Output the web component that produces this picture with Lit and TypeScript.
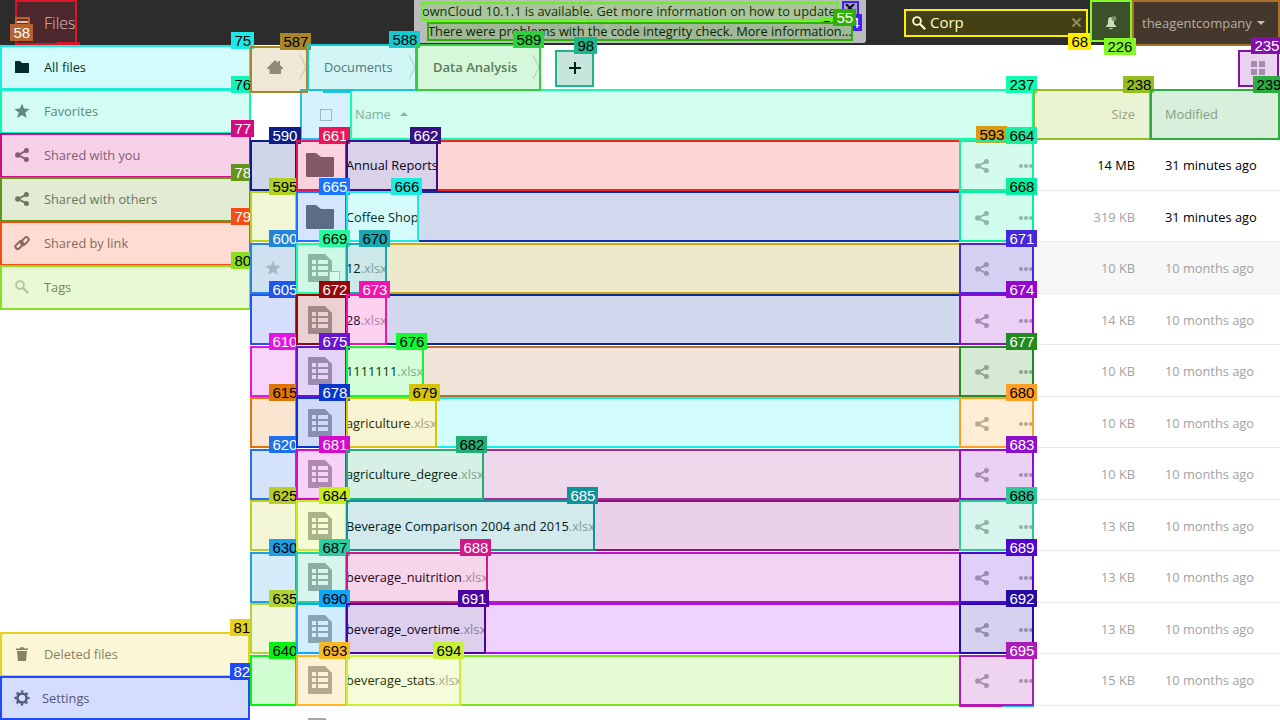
import { LitElement, html, css, svg, nothing } from "lit";
import { customElement } from "lit/decorators.js";
import { styleMap } from "lit/directives/style-map.js";

type Mark = { x: number; y: number; w: number; h: number; c: string; n?: string; lx?: number; ly?: number; lw?: number; lh?: number; shift?: number; dark?: boolean };

const sharePath = svg`<path d="M3 7 L11.3 2.6 M3 7 L11.3 11.4" stroke="currentColor" stroke-width="1.8" fill="none"/><circle cx="2.8" cy="7" r="2.7"/><circle cx="11.4" cy="2.6" r="2.5"/><circle cx="11.4" cy="11.4" r="2.5"/>`;

const ICONS: Record<string, unknown> = {
  folder: svg`<path d="M0 1.5Q0 1 .6 1H5l2 2h6.4q.6 0 .6.6V12.400q0 .6-.6.6H.6q-.6 0-.6-.6z"/>`,
  star: svg`<path d="M7 -.5l2 5.100 5.500.4-4.200 3.500 1.400 5.400L7 11l-4.700 2.900 1.400-5.400L-.5 5l5.500-.4z"/>`,
  share: sharePath,
  link: svg`<g fill="none" stroke="currentColor" stroke-width="2" transform="rotate(-45 7 7)"><rect x="-.9" y="4.300" width="9" height="4.600" rx="2.300"/><rect x="5.900" y="5.300" width="9" height="4.600" rx="2.300"/></g>`,
  search: svg`<circle cx="5" cy="5" r="3.900" fill="none" stroke="currentColor" stroke-width="1.900"/><path d="M7.800 7.800L13.200 13.200" stroke="currentColor" stroke-width="2.300"/>`,
  trash: svg`<path d="M1 1.400h3.800L5.300.3h3.400l.5 1.100H13v1.700H1zM2 4h10l-1 10H3z"/>`,
  gear: svg`<g fill="none" stroke="currentColor"><circle cx="7" cy="7" r="4.600" stroke-width="2.500"/><circle cx="7" cy="7" r="6.600" stroke-width="1.900" stroke-dasharray="2.400 2.784" stroke-dashoffset="1.200"/></g>`,
};

const NAV = [
  ["folder", "All files", "active"],
  ["star", "Favorites", ""],
  ["share", "Shared with you", ""],
  ["share", "Shared with others", ""],
  ["link", "Shared by link", ""],
  ["search", "Tags", "faint"],
];

const FILES = [
  { name: "Annual Reports", ext: "", size: "14 MB", date: "31 minutes ago", end: 438, c: ["#0a2088", "#ec1458", "#3a0e88", "#f52222", "#1cecA0"], n: [590, 661, 662, 664], d: "wwwb" },
  { name: "Coffee Shop", ext: "", size: "319 KB", date: "31 minutes ago", end: 419, c: ["#b2d222", "#1a74ff", "#1ceade", "#0e2ea4", "#06eea0"], n: [595, 665, 666, 668], d: "bwbb" },
  { name: "12", ext: ".xlsx", size: "10 KB", date: "10 months ago", end: 387, c: ["#2484d8", "#22fc9c", "#18a8b0", "#ccaa14", "#4628dc"], n: [600, 669, 670, 671], d: "wbbw" },
  { name: "28", ext: ".xlsx", size: "14 KB", date: "10 months ago", end: 387, c: ["#2056ee", "#960808", "#f212b0", "#0a2898", "#9406d0"], n: [605, 672, 673, 674], d: "wwww" },
  { name: "1111111", ext: ".xlsx", size: "10 KB", date: "10 months ago", end: 424, c: ["#e614e6", "#6816d6", "#10f830", "#b87230", "#228a1e"], n: [610, 675, 676, 677], d: "wwbw" },
  { name: "agriculture", ext: ".xlsx", size: "10 KB", date: "10 months ago", end: 437, c: ["#de7606", "#0636d2", "#d6c408", "#12eeee", "#ff9e22"], n: [615, 678, 679, 680], d: "bwbb" },
  { name: "agriculture_degree", ext: ".xlsx", size: "10 KB", date: "10 months ago", end: 484, c: ["#2070ec", "#d60ace", "#24ae76", "#9c3292", "#8e0ecc"], n: [620, 681, 682, 683], d: "wwbw" },
  { name: "Beverage Comparison 2004 and 2015", ext: ".xlsx", size: "13 KB", date: "10 months ago", end: 595, c: ["#bacc26", "#c6ee1c", "#10929a", "#940c84", "#28c898"], n: [625, 684, 685, 686], d: "bbwb" },
  { name: "beverage_nuitrition", ext: ".xlsx", size: "13 KB", date: "10 months ago", end: 488, c: ["#1e9ee8", "#26cea0", "#d01888", "#b41cc0", "#5404d2"], n: [630, 687, 688, 689], d: "bbww" },
  { name: "beverage_overtime", ext: ".xlsx", size: "13 KB", date: "10 months ago", end: 486, c: ["#b0d432", "#0ea6f6", "#4c04a0", "#a80ef8", "#240ca4"], n: [635, 690, 691, 692], d: "bbww" },
  { name: "beverage_stats", ext: ".xlsx", size: "15 KB", date: "10 months ago", end: 461, c: ["#08f210", "#fcb824", "#c8f034", "#7ae61c", "#ac1cb8"], n: [640, 693, 694, 695], d: "bbbw" },
];

const ROW_TOPS = [140, 191, 243, 294, 346, 397, 449, 500, 552, 603, 655];

// A frame whose tag sits on its upper right corner, or its lower one when the frame touches the top edge.
const mark = (x: number, y: number, r: number, b: number, c: string, n = "", ink = "w", extra: Partial<Mark> = {}): Mark => {
  const lw = n.length === 3 ? 31 : 23;
  return { x, y, w: r - x, h: b - y, c, n, dark: ink === "b", lx: r + 3 - lw, ly: y - 13, lw, ...extra };
};

const MARKS: Mark[] = [
  mark(421, 2, 839, 21, "#66f222", "53", "b", { ly: 17, lh: 5 }),
  mark(842, 1, 859, 18, "#4420f0", "54", "w", { ly: 14, lx: 853, lw: 9, shift: -13 }),
  mark(427, 22, 853, 41, "#2eb006", "55"),
  mark(15, 0, 77, 45, "#dc1428"),
  mark(15, 17, 30, 28, "#b86430", "58", "w", { ly: 24 }),
  mark(904, 9, 1088, 37, "#ffee00", "68", "b", { ly: 33 }),
  mark(0, 45, 251, 90, "#1ceae8", "75", "b"),
  mark(0, 89, 251, 134, "#14f4b8", "76", "b", { lw: 19 }),
  mark(0, 133, 251, 178, "#d40c84", "77"),
  mark(0, 177, 251, 222, "#64941a", "78", "w", { lw: 19 }),
  mark(0, 221, 251, 266, "#f44c14", "79", "w", { lw: 19 }),
  mark(0, 265, 251, 310, "#8ae020", "80", "b", { lw: 19 }),
  mark(0, 632, 250, 677, "#e8d020", "81", "b", { lx: 230, lw: 20 }),
  mark(0, 676, 250, 720, "#2048fc", "82", "w", { lx: 230, lw: 20 }),
  mark(555, 50, 594, 87, "#1cb48a", "98", "b"),
  mark(1132, 0, 1280, 46, "#a87028"),
  mark(1090, 0, 1132, 42, "#84f828", "226", "b", { ly: 38, lx: 1104, lw: 32 }),
  mark(1238, 50, 1279, 87, "#8410ac", "235"),
  mark(300, 89, 352, 140, "#28b8fc"),
  mark(350, 89, 1034, 140, "#12fcb0", "237", "b"),
  mark(1033, 89, 1151, 140, "#94be20", "238", "b"),
  mark(1150, 89, 1280, 140, "#2cac40", "239", "b", { lx: 1253 }),
  mark(250, 46, 308, 93, "#a88628", "587", "b"),
  mark(307, 44, 417, 91, "#12cad0", "588", "b"),
  mark(416, 44, 541, 91, "#2cd23c", "589", "b"),
  ...FILES.map((f, i) => mark(250, ROW_TOPS[i], 297, ROW_TOPS[i] + 51, f.c[0], String(f.n[0]), f.d[0], { lx: 269, lw: i ? 28 : 32 })),
  { x: 0, y: 0, w: 0, h: 0, c: "#da9c16", n: "593", lx: 976, ly: 126, lw: 31, dark: true },
  ...FILES.flatMap((f, i) => {
    const t = ROW_TOPS[i], b = t + 51;
    return [
      mark(f.end - 2, t, 961, b, f.c[3]),
      mark(296, t, 348, b, f.c[1], String(f.n[1]), f.d[1], { w: 51, lx: 319 }),
      mark(346, t, f.end, b, f.c[2], String(f.n[2]), f.d[2]),
      mark(959, t, 1034, b, f.c[4], String(f.n[3]), f.d[3]),
    ];
  }),
];

@customElement("app-icon")
class AppIcon extends LitElement {
  static properties = { name: {} };
  declare name: string;
  static styles = css`
    :host { display: inline-flex; width: 14px; height: 14px; flex: none; }
    svg { width: 100%; height: 100%; overflow: visible; fill: currentColor; }
  `;
  render() {
    return html`<svg viewBox="0 0 14 14">${ICONS[this.name]}</svg>`;
  }
}

@customElement("app-root")
class AppRoot extends LitElement {
  static styles = css`
    :host { display: block; position: relative; width: 1280px; height: 720px; overflow: hidden; background: #fff; font: 12.8px/20px "Open Sans", sans-serif; color: #000; }
    * { box-sizing: border-box; }
    .header { height: 45px; background: #2c2c2c; display: flex; align-items: center; color: #bbb; }
    .menu { width: 29px; padding-left: 17px; display: grid; gap: 2px; margin-bottom: 2px; }
    .menu i { height: 2px; width: 11px; background: #fff; }
    .title { margin-left: 15px; font-size: 16px; font-weight: 300; color: #dcdcdc; flex: 1; }
    .search { width: 180px; height: 26px; background: #171717; display: flex; align-items: center; padding: 0 5px 0 6px; color: #fff; font-size: 15px; margin-right: 3px; }
    .search span { margin-left: 4px; flex: 1; padding-bottom: 2px; }
    .search svg { width: 9px; height: 9px; }
    .bell { width: 43px; display: flex; justify-content: center; }
    .user { width: 148px; padding: 1px 0 0 10px; display: flex; align-items: center; gap: 5px; white-space: nowrap; font-size: 13px; }
    .caret { border: 4px solid transparent; border-top-color: #ccc; border-bottom: 0; }
    .note { position: absolute; left: 414px; top: 0; width: 452px; height: 43px; background: #bbb; border-radius: 0 0 3px 3px; white-space: nowrap; color: #000; padding-top: 1px; overflow: hidden; }
    .note p { margin: 0; position: relative; }
    .note .first { padding-left: 8px; width: 425px; overflow: hidden; }
    .note .second { padding-left: 14px; }
    .note .close { position: absolute; left: 431px; top: 4px; }
    .ghost { position: absolute; left: 155px; top: 3px; opacity: .13; }
    .ghost text { font: 300 18px "Open Sans", sans-serif; }
    .body { display: flex; height: 675px; }
    .side { width: 250px; display: flex; flex-direction: column; }
    .item { height: 44px; display: flex; align-items: center; padding-left: 15px; gap: 15px; color: #707070; }
    .item.active { color: #000; }
    .item.faint app-icon { opacity: .45; }
    .grow { flex: 1; }
    .settings { gap: 13px; color: #5c5c5c; }
    .main { flex: 1; min-width: 0; }
    .bar { height: 45px; display: flex; align-items: flex-start; color: #666; }
    .crumb { display: flex; align-items: center; justify-content: space-between; height: 44px; }
    .crumb svg { flex: none; }
    .home { width: 57px; padding-left: 17px; }
    .docs { width: 109px; padding-left: 17px; }
    .here { width: 124px; padding-left: 17px; font-weight: 600; font-size: 13px; }
    .plus { margin: 6px 0 0 17px; width: 36px; height: 34px; background: #f0f0f0; display: flex; align-items: center; justify-content: center; }
    .tiles { margin: 16px 15px 0 auto; display: grid; grid-template-columns: 6px 6px; gap: 2px; }
    .tiles i { height: 6px; background: #aaa; }
    .row { display: grid; grid-template-columns: 46px 50px 614px 74px 116px 130px; height: 51.5px; align-items: center; border-bottom: 1px solid #ebebeb; padding-top: 2px; }
    .head { height: 49px; color: #999; border: 0; padding: 0 0 1px; }
    .head .name { display: flex; align-items: center; gap: 9px; padding-left: 9px; }
    .up { border: 4px solid transparent; border-bottom-color: #aaa; border-top: 0; }
    .box { width: 12px; height: 12px; border: 1px solid #b8b8b8; margin: 1px 0 0 24px; background: #fff; }
    .hover { background: #f7f7f7; }
    .fav { height: 14px; padding-left: 16px; display: flex; color: #c4c4c4; }
    .kind { position: relative; display: flex; justify-content: center; padding-right: 2px; }
    .kind .pick { position: absolute; left: 33px; top: 17px; margin: 0; width: 11px; height: 11px; }
    .name { white-space: nowrap; }
    .ext { opacity: .4; }
    .acts { display: flex; align-items: center; padding: 2px 0 0 15px; gap: 30px; color: #aaa; height: 16px; }
    .size { text-align: right; padding-right: 15px; }
    .date { padding-left: 15px; }
    .dim { color: #a2a2a2; }
    .frame { position: absolute; }
    .tint, .edge { position: absolute; inset: 0; }
    .tint { background: currentColor; opacity: .19; }
    .edge { border: 2px solid currentColor; }
    .tag { position: absolute; height: 17px; font: 15px/18px "Liberation Sans", Arial, sans-serif; color: #fff; padding-left: 3px; overflow: hidden; white-space: nowrap; }
    .tag.dark { color: #000; }
    .bit { position: absolute; height: 1px; }
    .bit.pink { left: 959px; top: 706px; width: 44px; background: #c818b0; }
    .bit.cyan { left: 1003px; top: 706px; width: 31px; background: #10c8f8; }
    .bit.red { left: 57px; top: 42px; width: 23px; height: 3px; background: #dc1428; }
    .bit.blue { left: 323px; top: 91px; width: 27px; height: 2px; background: #28b8fc; }
  `;

  private chevron() {
    return html`<svg width="8" height="26"><path d="M1 1l6 12-6 12" fill="none" stroke="#ccc"/></svg>`;
  }

  private kind(folder: boolean) {
    return folder
      ? html`<svg width="28" height="24"><path d="M0 1q0-1 1-1h9l5 4h12q1 0 1 1v18q0 1-1 1H1q-1 0-1-1z" fill="#6b6b6b"/></svg>`
      : html`<svg width="24" height="28"><path fill-rule="evenodd" fill="#a5a5a5" d="M1 0h16l7 7v20q0 1-1 1H1q-1 0-1-1V1q0-1 1-1zM4 6v4h4V6zm6 0v4h10V6zM4 12v4h4v-4zm6 0v4h10v-4zM4 18v4h4v-4zm6 0v4h10v-4z"/></svg>`;
  }

  private row(f: (typeof FILES)[number], i: number) {
    return html`<div class="row ${i === 2 ? "hover" : ""}">
      <div class="fav">${i === 2 ? html`<app-icon name="star"></app-icon>` : nothing}</div>
      <div class="kind">${this.kind(i < 2)}${i === 2 ? html`<span class="box pick"></span>` : nothing}</div>
      <div class="name">${f.name}<span class="ext">${f.ext}</span></div>
      <div class="acts"><app-icon name="share"></app-icon><svg width="15" height="4" fill="#aaa"><circle cx="2" cy="2" r="2"/><circle cx="7" cy="2" r="2"/><circle cx="12" cy="2" r="2"/></svg></div>
      <div class="size ${i ? "dim" : ""}">${f.size}</div>
      <div class="date ${i > 1 ? "dim" : ""}">${f.date}</div>
    </div>`;
  }

  private mark(m: Mark) {
    return html`
      ${m.w ? html`<div class="frame" style=${styleMap({ left: m.x + "px", top: m.y + "px", width: m.w + "px", height: m.h + "px", color: m.c })}><div class="tint"></div><div class="edge"></div></div>` : nothing}
      ${m.n ? html`<div class="tag ${m.dark ? "dark" : ""}" style=${styleMap({ left: m.lx + "px", top: m.ly + "px", width: m.lw + "px", height: (m.lh ?? 17) + "px", textIndent: (m.shift ?? 0.4) + "px", background: m.c })}>${m.n}</div>` : nothing}`;
  }

  render() {
    return html`
      <div class="header">
        <div class="menu"><i></i><i></i><i></i></div>
        <div class="title">Files</div>
        <div class="search">
          <app-icon name="search"></app-icon><span>Corp</span>
          <svg viewBox="0 0 9 9"><path d="M.5.5l8 8m0-8l-8 8" stroke="#777" stroke-width="2"/></svg>
        </div>
        <div class="bell"><svg width="12" height="14"><path d="M5 1q3 0 4 3v4l2 2v1H1v-1l2-2V4q0-2 2-3zM4 12h4q-2 2.500-4 0z" fill="#d8d8d8"/><circle cx="9" cy="2.500" r="2.500" fill="#777"/></svg></div>
        <div class="user">theagentcompany <span class="caret"></span></div>
      </div>
      <div class="body">
        <div class="side">
          ${NAV.map(([icon, label, cls]) => html`<div class="item ${cls}"><app-icon name=${icon}></app-icon>${label}</div>`)}
          <div class="grow"></div>
          <div class="item"><app-icon name="trash"></app-icon>Deleted files</div>
          <div class="item settings"><app-icon name="gear"></app-icon>Settings</div>
        </div>
        <div class="main">
          <div class="bar">
            <div class="crumb home"><svg width="16" height="16"><path d="M8 1l3 3V2h2v4l3 3v1h-2v5H9.500v0H2.500v-5H0V9z" fill="#8c8c8c"/></svg>${this.chevron()}</div>
            <div class="crumb docs">Documents${this.chevron()}</div>
            <div class="crumb here">Data Analysis${this.chevron()}</div>
            <div class="plus"><svg width="12" height="12"><path d="M6 0v12M0 6h12" stroke="#000" stroke-width="2"/></svg></div>
            <div class="tiles"><i></i><i></i><i></i><i></i></div>
          </div>
          <div class="row head">
            <div></div><div><div class="box"></div></div><div class="name">Name <span class="up"></span></div><div></div>
            <div class="size">Size</div><div class="date">Modified</div>
          </div>
          ${FILES.map((f, i) => this.row(f, i))}
          <div class="row"><div></div><div class="kind">${this.kind(false)}</div></div>
        </div>
      </div>
      <div class="note">
        <svg class="ghost" width="160" height="40" fill="none" stroke="#fff" stroke-width="3"><circle cx="28" cy="16" r="13"/><circle cx="11" cy="26" r="8"/><circle cx="46" cy="25" r="9"/><text x="67" y="24" fill="#fff" stroke="none">ownCloud</text></svg>
        <p class="first">ownCloud 10.1.1 is available. Get more information on how to update.</p>
        <p class="second">There were problems with the code integrity check. More information…</p>
        <svg class="close" width="10" height="8"><path d="M1 0l4 4 4-4M1 8l4-4 4 4" fill="none" stroke="#000" stroke-width="2"/></svg>
      </div>
      <div class="bit red"></div>
      ${MARKS.map((m) => this.mark(m))}
      <div class="bit blue"></div>
      <div class="bit pink"></div>
      <div class="bit cyan"></div>
    `;
  }
}
